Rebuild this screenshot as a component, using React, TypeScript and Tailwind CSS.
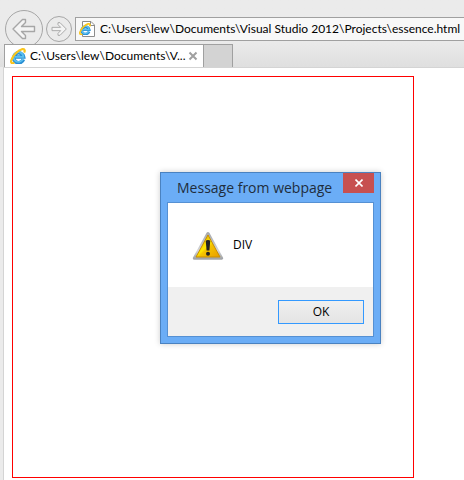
import React from "react";

const PAGE_URL =
  "C:\\Users\\lew\\Documents\\Visual Studio 2012\\Projects\\essence.html";

function BrowserLogo({ className }: { className?: string }) {
  return (
    <svg viewBox="0 0 16 16" className={className} fill="none" aria-hidden>
      <path
        d="M13.4 11.4A5 5 0 1 1 13.6 9H5"
        stroke="#2a8fd4"
        strokeWidth="3.6"
      />
      <path
        d="M13 11A4.9 4.9 0 1 1 13.4 8.8H5"
        stroke="#5cc0f0"
        strokeWidth="1.8"
      />
      <path
        d="M4.4 14.6C1.8 16 .6 14.8 1.3 12.2 2.4 8 8 2.2 12 1.2c2.8-.5 3.2 1.2 2.2 3.4"
        stroke="#fac51c"
        strokeWidth="2.2"
      />
    </svg>
  );
}

function NavArrow({ className }: { className?: string }) {
  return (
    <svg
      viewBox="0 0 24 24"
      className={className}
      fill="#f4f4f4"
      stroke="#a6a6a6"
      strokeWidth="1.4"
      strokeLinejoin="round"
      aria-hidden
    >
      <path d="M1 12 10.5 2.5H13.5V5.5L9.5 9.5H22.5V14.5H9.5L13.5 18.5V21.5H10.5Z" />
    </svg>
  );
}

function FileIcon() {
  return (
    <span className="relative block h-4 w-4 shrink-0">
      <svg viewBox="0 0 16 16" className="h-4 w-4" aria-hidden>
        <path d="M3.5.5H12L15.5 4V15.5H3.5Z" fill="#fff" stroke="#8c8c8c" />
        <path d="M11.5.5V4.5H15.5" fill="none" stroke="#8c8c8c" />
      </svg>
      <BrowserLogo className="absolute top-[2px] left-0 h-3 w-3" />
    </span>
  );
}

function WarningIcon() {
  return (
    <svg viewBox="0 0 32 32" className="h-8 w-8 shrink-0" aria-hidden>
      <defs>
        <linearGradient id="frame" x1="0" y1="0" x2="0" y2="1">
          <stop offset="0" stopColor="#a9abae" />
          <stop offset=".7" stopColor="#d5d6d8" />
          <stop offset="1" stopColor="#a3a5a8" />
        </linearGradient>
        <linearGradient id="sign" x1="0" y1="0" x2="1" y2="1">
          <stop offset="0" stopColor="#d99a00" />
          <stop offset=".48" stopColor="#ffe800" />
          <stop offset=".55" stopColor="#f5c400" />
          <stop offset="1" stopColor="#e89c00" />
        </linearGradient>
      </defs>
      <path
        d="M16 4.6 29.6 29.2H2.4Z"
        fill="url(#frame)"
        stroke="url(#frame)"
        strokeWidth="3.2"
        strokeLinejoin="round"
      />
      <path
        d="M16 6 28 28H4Z"
        fill="url(#sign)"
        stroke="#c98e00"
        strokeWidth="1"
        strokeLinejoin="round"
      />
      <path
        d="M13.8 12.4Q13.8 11 16 11T18.2 12.4L17.4 21.4H14.6Z"
        fill="#222"
      />
      <circle cx="16" cy="24.8" r="2" fill="#222" />
    </svg>
  );
}

function Toolbar() {
  return (
    <div className="flex h-11 items-start pl-[5px]">
      <button
        aria-label="Back"
        className="mt-[10px] flex h-[38px] w-[38px] shrink-0 items-center justify-center rounded-full border border-[#a6a6a6]"
      >
        <NavArrow className="h-6 w-6" />
      </button>
      <button
        aria-label="Forward"
        className="mt-4 ml-[3px] flex h-[26px] w-[26px] shrink-0 items-center justify-center rounded-full border border-[#a6a6a6]"
      >
        <NavArrow className="h-4 w-4 rotate-180" />
      </button>
      <div className="mt-[17px] ml-[3px] flex h-6 min-w-0 flex-1 items-center gap-[5px] border border-r-0 border-[#a0a0a0] bg-[#f8f8f8] pl-[3px]">
        <FileIcon />
        <input
          aria-label="Address"
          defaultValue={PAGE_URL}
          className="w-full min-w-0 bg-transparent font-['Lato',sans-serif] text-[12px] text-black outline-none"
        />
      </div>
    </div>
  );
}

function TabBar() {
  return (
    <div className="relative flex h-[23px] pl-1">
      <div className="flex w-[200px] items-center border border-b-0 border-[#a0a0a0] bg-white pr-[5px] pl-[5px]">
        <BrowserLogo className="h-4 w-4 shrink-0" />
        <span className="ml-1 flex-1 font-['Lato',sans-serif] text-[12px] whitespace-nowrap text-black">
          C:\Users\lew\Documents\V...
        </span>
        <button aria-label="Close tab" className="shrink-0">
          <svg
            viewBox="0 0 10 10"
            className="h-[10px] w-[10px]"
            stroke="#a0a0a0"
            strokeWidth="2"
            aria-hidden
          >
            <path d="M1.5 1.5 8.5 8.5M8.5 1.5 1.5 8.5" />
          </svg>
        </button>
      </div>
      <button
        aria-label="New tab"
        className="w-[29px] border border-b-0 border-l-0 border-[#a0a0a0] bg-[#d3d3d3]"
      />
    </div>
  );
}

function MessageDialog() {
  return (
    <div
      role="dialog"
      aria-labelledby="dialog-title"
      className="absolute top-[172px] left-[160px] w-[221px] border border-[#4a82c0] bg-[#6badf6] px-[6px] pb-[6px] shadow-[0_0_6px_rgba(0,0,0,0.2)]"
    >
      <div className="flex h-[29px] items-start justify-between">
        <h1
          id="dialog-title"
          className="pl-[10px] text-[14px] leading-[29px] whitespace-nowrap text-[#1f2d3d]"
        >
          Message from webpage
        </h1>
        <button
          aria-label="Close"
          className="flex h-5 w-[31px] shrink-0 items-center justify-center bg-[#c75050]"
        >
          <svg
            viewBox="0 0 8 8"
            className="h-2 w-2"
            stroke="#fff"
            strokeWidth="1.6"
            aria-hidden
          >
            <path d="M.5 .5 7.5 7.5M7.5 .5 .5 7.5" />
          </svg>
        </button>
      </div>
      <div className="border border-[#5590d3] bg-white">
        <div className="flex h-21 items-center gap-[9px] pl-6 text-[12px] text-black">
          <WarningIcon />
          <p>DIV</p>
        </div>
        <div className="flex h-[49px] items-center justify-end bg-[#f0f0f0] pr-[9px]">
          <button className="h-6 w-[86px] border border-[#3399ff] bg-linear-to-b from-[#f0f0f0] to-[#e4e4e4] text-[12px] text-black">
            OK
          </button>
        </div>
      </div>
    </div>
  );
}

export default function App() {
  return (
    <div className="relative flex min-h-screen flex-col overflow-hidden bg-[#ebebeb] font-['Open_Sans','Noto_Sans',sans-serif]">
      <header className="bg-linear-to-b from-[#ebebeb] from-60% to-[#dfdfdf]">
        <Toolbar />
        <TabBar />
      </header>
      <main className="ml-[3px] flex-1 border-t border-l border-[#d4d4d4] bg-white pt-2 pl-2">
        <div className="h-[402px] w-[402px] border border-[#ff0000]" />
      </main>
      <MessageDialog />
    </div>
  );
}
